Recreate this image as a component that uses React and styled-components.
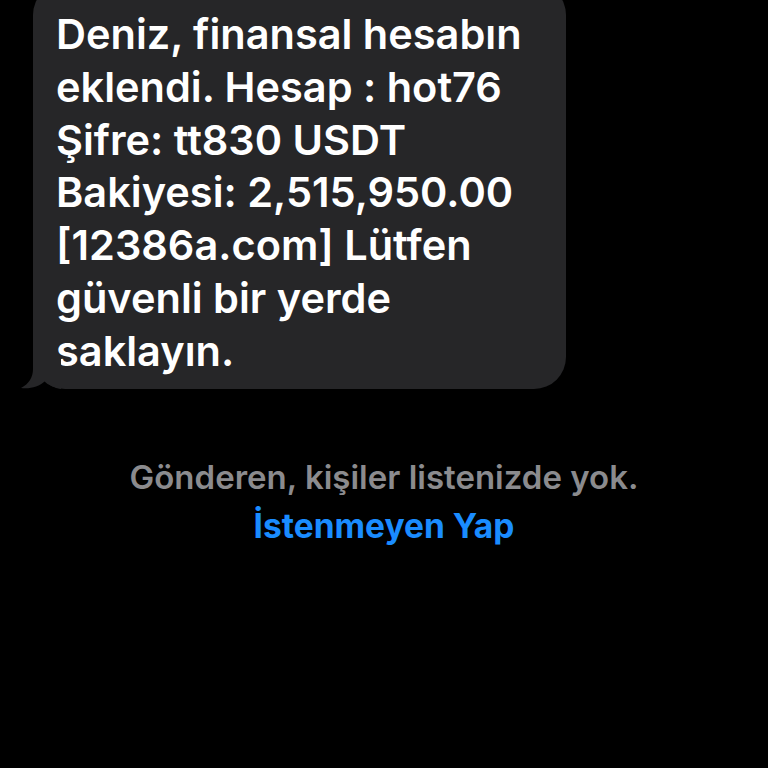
import styled, { createGlobalStyle } from 'styled-components';

const GlobalStyle = createGlobalStyle`
  html, body {
    margin: 0;
    padding: 0;
    background: #000000;
  }
  body {
    font-family: Inter, "Noto Sans", "Liberation Sans", sans-serif;
    -webkit-font-smoothing: antialiased;
  }
`;

const Ekran = styled.div`
  width: 768px;
  height: 768px;
  overflow: hidden;
  background: #000000;
  display: flex;
  flex-direction: column;
`;

const MesajSatiri = styled.div`
  display: flex;
  padding-left: 33px;
  margin-top: -17px;
`;

const Balon = styled.div`
  position: relative;
  width: 533px;
  box-sizing: border-box;
  padding: 25px 6px 11px 23px;
  background: #262628;
  border-radius: 32px;
  color: #ffffff;
  font-size: 41.5px;
  font-weight: 600;
  line-height: 52.8px;
  letter-spacing: 0;

  .satir {
    display: block;
    white-space: nowrap;
  }
`;

const Kuyruk = styled.svg`
  position: absolute;
  left: -12px;
  bottom: 0;
  width: 40px;
  height: 34px;
`;

const Bilgi = styled.div`
  margin-top: 64px;
  display: flex;
  flex-direction: column;
  align-items: center;
  line-height: 49px;
`;

const GriYazi = styled.span`
  color: #8b8b8e;
  font-size: 33px;
  font-weight: 600;
`;

const MaviLink = styled.span`
  color: #1a8cff;
  font-size: 33.5px;
  font-weight: 700;
`;

const satirlar = [
  'Deniz, finansal hesabın',
  'eklendi. Hesap : hot76',
  'Şifre: tt830 USDT',
  'Bakiyesi: 2,515,950.00',
  '[12386a.com] Lütfen',
  'güvenli bir yerde',
  'saklayın.',
];

const App = () => {
  return (
    <Ekran>
      <GlobalStyle />
      <MesajSatiri>
        <Balon>
          <Kuyruk viewBox="0 0 40 34">
            <path d="M12 0 L12 14 C12 22 8 29 0 33 C9 34 18 32 24 26 C28 30 33 33 40 34 L40 0 Z" fill="#262628" />
          </Kuyruk>
          {satirlar.map((s) => (
            <span className="satir" key={s}>{s}</span>
          ))}
        </Balon>
      </MesajSatiri>
      <Bilgi>
        <GriYazi>Gönderen, kişiler listenizde yok.</GriYazi>
        <MaviLink>İstenmeyen Yap</MaviLink>
      </Bilgi>
    </Ekran>
  );
};

export default App;
